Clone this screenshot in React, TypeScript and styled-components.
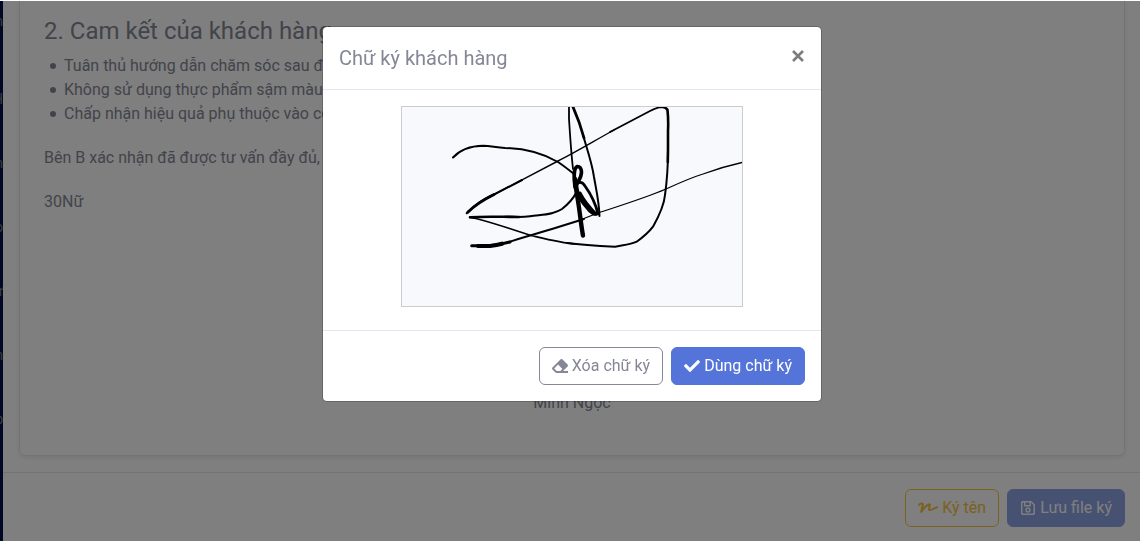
import React from "react";
import styled, { createGlobalStyle, css } from "styled-components";
import { FaCheck, FaEraser, FaRegSave } from "react-icons/fa";

const GlobalStyle = createGlobalStyle`
  *, *::before, *::after { box-sizing: border-box; }
  body {
    margin: 0;
    background: #fff;
    color: #858796;
    font-family: Roboto, "Noto Sans", sans-serif;
    font-size: 16px;
    line-height: 24px;
  }
`;

const Shell = styled.div`
  display: flex;
  min-height: 100vh;
  padding-top: 1px;
`;

const Sidebar = styled.nav`
  width: 3px;
  flex: none;
  overflow: hidden;
  background: #001048;
  display: flex;
  flex-direction: column;
  align-items: flex-end;
  gap: 40px;
  padding-top: 8px;
  color: #777a88;
  font-size: 14px;
`;

const Brand = styled.span`
  margin-bottom: 14px;
`;

const Page = styled.div`
  flex: 1;
  min-width: 0;
  display: flex;
  flex-direction: column;
`;

const Main = styled.main`
  flex: 1;
  display: flex;
  padding: 0 15px 16px 16px;
`;

const Card = styled.article`
  flex: 1;
  display: flex;
  flex-direction: column;
  padding: 16px 24px 40px;
  border: 1px solid #e3e6f0;
  border-top: 0;
  border-radius: 0 0 6px 6px;
  box-shadow: 0 2px 4px rgba(0, 0, 0, 0.08);
`;

const Heading = styled.h4`
  margin: 0 0 8px;
  font-size: 24px;
  font-weight: 400;
  line-height: 29px;
`;

const Terms = styled.ul`
  margin: 0 0 20px;
  padding-left: 6px;
  list-style: none;
`;

const Term = styled.li`
  display: flex;
  align-items: center;
  gap: 8px;

  &::before {
    content: "";
    width: 6px;
    height: 6px;
    border-radius: 50%;
    background: currentColor;
  }
`;

const Text = styled.p`
  margin: 0 0 20px;
`;

const Signer = styled.p`
  margin: auto 0 0;
  text-align: center;
`;

const Actions = styled.footer`
  display: flex;
  justify-content: flex-end;
  gap: 8px;
  padding: 16px 15px 14px;
  border-top: 1px solid #e3e6f0;
`;

type Variant = "primary" | "secondary" | "warning";

const variants = {
  primary: css`
    background: #5474d9;
    border-color: #5474d9;
    color: #fff;
  `,
  secondary: css`
    border-color: #858796;
    color: #858796;
  `,
  warning: css`
    border-color: #f6c23e;
    color: #f6c23e;
  `,
};

const Button = styled.button<{ $variant: Variant }>`
  display: inline-flex;
  align-items: center;
  gap: 4px;
  height: 38px;
  padding: 0 12px;
  border: 1px solid transparent;
  border-radius: 6px;
  background: transparent;
  font: inherit;
  white-space: nowrap;
  ${(p) => variants[p.$variant]}

  svg {
    height: 16px;
    width: auto;
  }
  &:disabled {
    opacity: 0.65;
  }
`;

const Backdrop = styled.div`
  position: fixed;
  inset: 1px 0 0;
  display: flex;
  justify-content: center;
  align-items: flex-start;
  padding: 25px 0 0 4px;
  background: rgba(0, 0, 0, 0.5);
`;

const Dialog = styled.section`
  width: 100%;
  max-width: 500px;
  background: #fff;
  background-clip: padding-box;
  border: 1px solid rgba(0, 0, 0, 0.2);
  border-radius: 5px;
`;

const DialogHeader = styled.header`
  display: flex;
  justify-content: space-between;
  align-items: flex-start;
  padding: 16px;
  border-bottom: 1px solid #e3e6f0;
`;

const Title = styled.h5`
  margin: 0;
  font-size: 20px;
  font-weight: 400;
  line-height: 30px;
`;

const Close = styled.button`
  display: flex;
  padding: 7px 1px;
  border: 0;
  background: none;
  color: #7c7c7c;
`;

const DialogBody = styled.div`
  display: flex;
  justify-content: center;
  padding: 16px 16px 23px;
`;

const Pad = styled.svg`
  width: 342px;
  height: 201px;
  border: 1px solid #ccc;
  background: #f8f9fc;
`;

const DialogFooter = styled.footer`
  display: flex;
  justify-content: flex-end;
  gap: 8px;
  padding: 16px;
  border-top: 1px solid #e3e6f0;
`;

const menuLabels = ["CH", "Bán", "Kho", "Thư", "Đơn", "Nhập"];

const strokes: { w: number; d: string }[] = [
  // upper arc and the lower return
  { w: 2, d: "M51 50.5C56 45 64 39 81 38.7C89 39 94 40.5 103 41C125 41.5 142 47 156 55C162 59 167 63 172 67" },
  { w: 2, d: "M174 86C170 94 165 98 160 102C151 108 140 107.500 128 109.300C119 110.500 111 109.700 103 109.700" },
  { w: 2.6, d: "M117 110C100 110 84 109 68 110.300" },
  // wide hook
  { w: 1.6, d: "M68 110.500C82 112 110 123 130 128.700C144 132 160 136 173 137" },
  { w: 2, d: "M165 136C180 138 198 139 213 139.700C222 138 229 137.500 234.700 134.700C240 131 247 125 251 119.700C257 109 262 99 263 88C265 74 266 58 266 43" },
  { w: 2.6, d: "M265.800 55L266 43V24C266.500 14 266 8 265.500 3Q264 .5 261 0H257" },
  { w: 1.8, d: "M258 0Q252 2 248 4L208 25" },
  { w: 1.4, d: "M212 23C192 34 174 45 156 54L93 87" },
  { w: 2, d: "M120 73L93 87Q78 93 64.700 106.300" },
  { w: 3, d: "M92 87.500C81 93 72 99 66 105" },
  // rising line
  { w: 3, d: "M69.700 138.700L88 138.700Q99 137.500 108 135" },
  { w: 4.2, d: "M76 139H88Q95 138 100 136.700" },
  { w: 2, d: "M104 136C118 131 134 127 150 122L182 112" },
  { w: 1.3, d: "M178 113L196 106C220 98 243 91 264 82C276 76.500 288 71 301 67Q320 60 340 55.500" },
  // tall narrow stroke
  { w: 1.8, d: "M167 0V12C168 28 169 44 171 62" },
  { w: 2.8, d: "M171 0C175 9 179 20 182 31" },
  { w: 2, d: "M181 28C185 42 190 56 192 70C194 82 197 94 197.500 109" },
  // small bold loops
  { w: 3.6, d: "M173 80C172 71 171 62 175 59.500Q179 59 179.500 65C179.500 71 176 74 174.500 78C174.500 84 178 92 182 97C186 102 190 107 194 107" },
  { w: 2.8, d: "M176 76Q180 74 183 79C188 86 194 98 196 107" },
  { w: 4.4, d: "M173 72C173 78 175 86 176 94C178 106 179 118 181 128.500" },
  { w: 3, d: "M178 86C182 94 188 101 194 107" },
];

const SignatureIcon = () => (
  <svg viewBox="0 0 20 16" fill="none" stroke="currentColor" strokeWidth="2" strokeLinecap="round" strokeLinejoin="round">
    <path d="M1 5C2 3.300 4.800 2.600 4.800 4.600C4.800 7 3.200 9.500 3.200 12C5.500 8.500 9 4.600 11.600 4.200C12.800 4.600 10.200 8.600 11.200 9.900C12.600 11 15.500 8.600 19 7.200" />
  </svg>
);

export default function App() {
  return (
    <>
      <GlobalStyle />
      <Shell>
        <Sidebar aria-hidden="true">
          <Brand>Tổn</Brand>
          {menuLabels.map((label) => (
            <span key={label}>{label}</span>
          ))}
        </Sidebar>
        <Page>
          <Main>
            <Card>
              <Heading>2. Cam kết của khách hàng</Heading>
              <Terms>
                <Term>Tuân thủ hướng dẫn chăm sóc sau điều trị</Term>
                <Term>Không sử dụng thực phẩm sậm màu</Term>
                <Term>Chấp nhận hiệu quả phụ thuộc vào cơ địa</Term>
              </Terms>
              <Text>Bên B xác nhận đã được tư vấn đầy đủ,</Text>
              <Text>30Nữ</Text>
              <Signer>Minh Ngọc</Signer>
            </Card>
          </Main>
          <Actions>
            <Button type="button" $variant="warning">
              <SignatureIcon />
              Ký tên
            </Button>
            <Button type="button" $variant="primary" disabled>
              <FaRegSave />
              Lưu file ký
            </Button>
          </Actions>
        </Page>
      </Shell>
      <Backdrop>
        <Dialog role="dialog" aria-modal="true" aria-labelledby="sign-title">
          <DialogHeader>
            <Title id="sign-title">Chữ ký khách hàng</Title>
            <Close type="button" aria-label="Đóng">
              <svg width="12" height="12" viewBox="0 0 12 12" stroke="currentColor" strokeWidth="2.6">
                <path d="M1 1L11 11M11 1L1 11" />
              </svg>
            </Close>
          </DialogHeader>
          <DialogBody>
            <Pad viewBox="0 0 340 199" fill="none" stroke="#000" strokeLinecap="round" strokeLinejoin="round">
              {strokes.map((s) => (
                <path key={s.d} d={s.d} strokeWidth={s.w} />
              ))}
            </Pad>
          </DialogBody>
          <DialogFooter>
            <Button type="button" $variant="secondary">
              <FaEraser />
              Xóa chữ ký
            </Button>
            <Button type="button" $variant="primary">
              <FaCheck />
              Dùng chữ ký
            </Button>
          </DialogFooter>
        </Dialog>
      </Backdrop>
    </>
  );
}
